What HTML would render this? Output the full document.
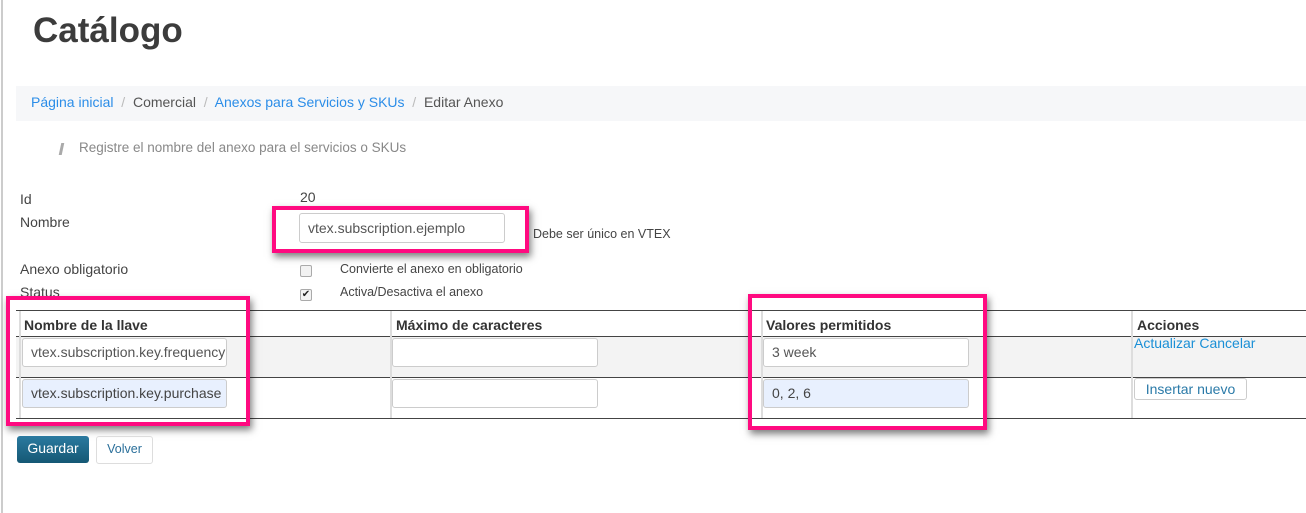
<!DOCTYPE html>
<html><head><meta charset="utf-8"><style>
body{margin:0;width:1306px;height:513px;background:#fff;position:relative;overflow:hidden;font-family:"Liberation Sans",sans-serif;color:#444}
.a{position:absolute;white-space:nowrap}
.t{font-size:14px;letter-spacing:0}
.s{font-size:12.5px;letter-spacing:0}
.inp{position:absolute;box-sizing:border-box;border:1px solid #ccc;border-radius:3px;background:#fff;font-size:14px;letter-spacing:0;color:#555;padding:0 8px;overflow:hidden;white-space:nowrap}
.blue{background:#e8f0fe}
.pink{position:absolute;box-sizing:border-box;border:4px solid #ff0a80;box-shadow:2px 4px 7px rgba(0,0,0,.5)}
.hl{position:absolute;left:16px;width:1290px;height:1px;background:#444}
.vl{position:absolute;width:2px;background:#ddd;top:311px;height:107px}
.cb{position:absolute;width:10px;height:10px;border:1px solid #aaa;border-radius:2px;background:#f2f2f2;font-size:10px;line-height:10px;text-align:center;color:#222}
</style></head><body>
<div class="a" style="left:1px;top:0;width:2px;height:513px;background:#ccc"></div>
<div class="a" style="left:33px;top:11px;font-size:35px;font-weight:bold;color:#3c3c3c;letter-spacing:0">Catálogo</div>
<div class="a" style="left:16px;top:86px;width:1290px;height:35px;background:#f6f7f9"></div>
<div class="a t" style="left:31px;top:94px"><span style="color:#2b8de8">Página inicial</span><span style="color:#bbb"> &nbsp;/&nbsp; </span><span style="color:#555">Comercial</span><span style="color:#bbb"> &nbsp;/&nbsp; </span><span style="color:#2b8de8">Anexos para Servicios y SKUs</span><span style="color:#bbb"> &nbsp;/&nbsp; </span><span style="color:#555">Editar Anexo</span></div>
<div class="a" style="left:60px;top:143px;width:3px;height:12px;background:#aaa;transform:skewX(-12deg)"></div>
<div class="a s" style="left:79px;top:140px;color:#888;font-size:13.5px">Registre el nombre del anexo para el servicios o SKUs</div>
<div class="a t" style="left:20px;top:191px">Id</div>
<div class="a t" style="left:300px;top:189px">20</div>
<div class="a t" style="left:20px;top:214px">Nombre</div>
<div class="inp" style="left:299px;top:213px;width:206px;height:30px;line-height:28px">vtex.subscription.ejemplo</div>
<div class="pink" style="left:272px;top:206px;width:257px;height:47px"></div>
<div class="a s" style="left:533px;top:227px">Debe ser único en VTEX</div>
<div class="a t" style="left:20px;top:261px">Anexo obligatorio</div>
<div class="cb" style="left:300px;top:265px"></div>
<div class="a s" style="left:340px;top:262px">Convierte el anexo en obligatorio</div>
<div class="a t" style="left:20px;top:284px">Status</div>
<div class="cb" style="left:300px;top:289px">✔</div>
<div class="a s" style="left:340px;top:285px">Activa/Desactiva el anexo</div>

<div class="a" style="left:16px;top:337px;width:1290px;height:40px;background:#f3f3f3"></div>
<div class="hl" style="top:310px"></div>
<div class="hl" style="top:336px"></div>
<div class="hl" style="top:377px"></div>
<div class="hl" style="top:418px"></div>
<div class="vl" style="left:19px"></div>
<div class="vl" style="left:390px"></div>
<div class="vl" style="left:761px"></div>
<div class="vl" style="left:1131px"></div>
<div class="a t" style="left:24px;top:317px;font-weight:bold;color:#333">Nombre de la llave</div>
<div class="a t" style="left:396px;top:317px;font-weight:bold;color:#333">Máximo de caracteres</div>
<div class="a t" style="left:766px;top:317px;font-weight:bold;color:#333">Valores permitidos</div>
<div class="a t" style="left:1137px;top:317px;font-weight:bold;color:#333">Acciones</div>
<div class="inp" style="left:22px;top:338px;width:205px;height:29px;line-height:27px">vtex.subscription.key.frequency</div>
<div class="inp" style="left:392px;top:338px;width:206px;height:29px"></div>
<div class="inp" style="left:763px;top:338px;width:206px;height:29px;line-height:27px">3 week</div>
<div class="a t" style="left:1134px;top:335px;color:#1a8fd6">Actualizar Cancelar</div>
<div class="inp blue" style="left:22px;top:379px;width:205px;height:29px;line-height:27px;color:#444">vtex.subscription.key.purchase</div>
<div class="inp" style="left:392px;top:379px;width:206px;height:29px"></div>
<div class="inp blue" style="left:763px;top:379px;width:206px;height:29px;line-height:27px;color:#444">0, 2, 6</div>
<div class="inp" style="left:1134px;top:378px;width:113px;height:22px;line-height:20px;color:#2a7aa8;text-align:center;padding:0">Insertar nuevo</div>
<div class="pink" style="left:6px;top:296px;width:244px;height:130px"></div>
<div class="pink" style="left:748px;top:294px;width:239px;height:136px"></div>
<div class="a t" style="left:17px;top:436px;width:72px;height:27px;border-radius:3px;background:linear-gradient(#2a7aa0,#155874);color:#fff;text-align:center;line-height:25px">Guardar</div>
<div class="a s" style="left:96px;top:436px;width:55px;height:26px;border:1px solid #ddd;border-radius:3px;color:#2a6f9a;text-align:center;line-height:25px">Volver</div>
</body></html>
